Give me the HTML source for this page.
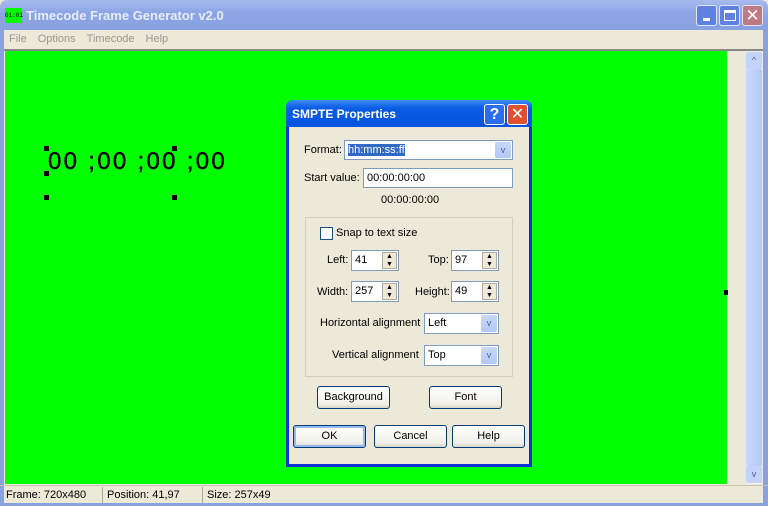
<!DOCTYPE html>
<html><head><style>
*{margin:0;padding:0;box-sizing:border-box}
body{width:768px;height:506px;overflow:hidden;background:#ece9d8;font-family:"Liberation Sans",sans-serif;font-size:11px;position:relative}
.abs{position:absolute}
.tb{left:0;top:0;width:768px;height:30px;background:linear-gradient(#a8bbef,#8ea6e6 40%,#8aa1e0);border-radius:7px 7px 0 0}
.title{left:26px;top:8px;color:#e6ecfa;font-weight:bold;font-size:13px}
.wb{top:5px;width:21px;height:21px;border:1px solid #dfe6fa;border-radius:3px}
.menu span{margin-right:11px;color:#9a988e}
.btn{position:absolute;background:linear-gradient(#fff,#f0efe9 80%,#d8d4c7);border:1px solid #003c74;border-radius:3px;text-align:center;font-size:11px;line-height:21px;color:#000}
.inp{position:absolute;background:#fff;border:1px solid #7f9db9;font-size:11px;padding-left:3px;line-height:18px}
.dd{position:absolute;right:1px;top:1px;width:16px;bottom:1px;background:linear-gradient(#c8d8fb,#b4c8f5);border-radius:2px;color:#4d6185;font-size:9px;text-align:center;line-height:17px}
.spin{position:absolute;right:1px;top:1px;width:15px;bottom:1px;background:#ece9d8;border:1px solid #b0aca0;font-size:7px;line-height:8px;text-align:center}
.lbl{position:absolute;font-size:11px;color:#000}
.h{position:absolute;width:5px;height:5px;background:#000}
</style></head><body>
<div class="abs tb"></div>
<div class="abs" style="left:5px;top:8px;width:17px;height:15px;background:#00ff00;font-size:6px;font-family:'Liberation Mono';line-height:15px;color:#000">01:01</div>
<div class="abs title">Timecode Frame Generator v2.0</div>
<div class="abs wb" style="left:696px;background:#5f82e0"><div class="abs" style="left:6px;top:12px;width:7px;height:3px;background:#fff"></div></div>
<div class="abs wb" style="left:719px;background:#5f82e0"><div class="abs" style="left:4px;top:4px;width:12px;height:11px;border:1px solid #fff;border-top-width:3px"></div></div>
<div class="abs wb" style="left:742px;background:#c07a85;color:#fff;font-size:17px;text-align:center;line-height:19px">✕</div>
<div class="abs" style="left:0;top:30px;width:4px;height:476px;background:#8aa1e0"></div>
<div class="abs" style="right:0;top:30px;width:5px;height:476px;background:#8aa1e0"></div>
<div class="abs" style="left:0;bottom:0;width:768px;height:3px;background:#8aa1e0"></div>
<div class="abs menu" style="left:9px;top:33px;font-size:11px"><span>File</span><span>Options</span><span>Timecode</span><span>Help</span></div>
<div class="abs" style="left:4px;top:49px;width:759px;height:2px;background:#888"></div>
<div class="abs" style="left:5px;top:51px;width:722px;height:433px;background:#00ff00"></div>
<div class="abs" style="left:746px;top:51px;width:16px;height:433px;background:#f3f1ea">
<div class="abs" style="left:0;top:1px;width:16px;height:17px;background:#c4d3fc;border-radius:2px;color:#4d6185;font-size:9px;text-align:center;line-height:17px">^</div>
<div class="abs" style="left:0;top:18px;width:16px;height:397px;background:linear-gradient(90deg,#c9d7fc,#b5c8f7);border-radius:2px"></div>
<div class="abs" style="left:0;top:415px;width:16px;height:17px;background:#c4d3fc;border-radius:2px;color:#4d6185;font-size:9px;text-align:center;line-height:17px">v</div>
</div>
<div class="abs" style="left:48px;top:148px;font-size:24px;letter-spacing:2.3px;white-space:nowrap;-webkit-text-stroke:0.4px #000">00 ;00 ;00 ;00</div>
<div class="h" style="left:44px;top:146px"></div><div class="h" style="left:172px;top:146px"></div>
<div class="h" style="left:44px;top:171px"></div>
<div class="h" style="left:44px;top:195px"></div><div class="h" style="left:172px;top:195px"></div>
<div class="h" style="left:724px;top:290px;width:4px"></div>
<div class="abs" style="left:0;top:485px;width:768px;height:1px;background:#c8c4b4"></div>
<div class="abs" style="left:6px;top:489px">Frame: 720x480</div>
<div class="abs" style="left:102px;top:487px;width:1px;height:16px;background:#aca899"></div>
<div class="abs" style="left:107px;top:489px">Position: 41,97</div>
<div class="abs" style="left:202px;top:487px;width:1px;height:16px;background:#aca899"></div>
<div class="abs" style="left:207px;top:489px">Size: 257x49</div>
<!-- dialog -->
<div class="abs" style="left:286px;top:100px;width:246px;height:367px;background:#0831d9;border-radius:7px 7px 0 0">
<div class="abs" style="left:0;top:0;width:246px;height:27px;background:linear-gradient(#3d8bf7,#0a5ce4 30%,#0553e0);border-radius:7px 7px 0 0"></div>
<div class="abs" style="left:6px;top:7px;color:#fff;font-weight:bold;font-size:12px">SMPTE Properties</div>
<div class="abs" style="left:198px;top:4px;width:21px;height:21px;background:#2a6df2;border:1px solid #fff;border-radius:3px;color:#fff;font-weight:bold;font-size:16px;text-align:center;line-height:19px">?</div>
<div class="abs" style="left:221px;top:4px;width:21px;height:21px;background:#e0522f;border:1px solid #fff;border-radius:3px;color:#fff;font-size:16px;text-align:center;line-height:19px">✕</div>
<div class="abs" style="left:3px;top:27px;width:240px;height:337px;background:#ece9d8"></div>
</div>
<div class="lbl" style="left:304px;top:144px">Format:</div>
<div class="inp" style="left:344px;top:140px;width:169px;height:20px"><span style="background:#316ac5;color:#fff">hh:mm:ss:ff</span><div class="dd">v</div></div>
<div class="lbl" style="left:304px;top:172px">Start value:</div>
<div class="inp" style="left:363px;top:168px;width:150px;height:20px">00:00:00:00</div>
<div class="lbl" style="left:381px;top:194px">00:00:00:00</div>
<div class="abs" style="left:305px;top:217px;width:208px;height:160px;border:1px solid #d0d0bf"></div>
<div class="abs" style="left:320px;top:227px;width:13px;height:13px;background:#fff;border:1px solid #1c5180"></div>
<div class="lbl" style="left:336px;top:227px">Snap to text size</div>
<div class="lbl" style="left:327px;top:254px">Left:</div>
<div class="inp" style="left:351px;top:250px;width:48px;height:21px">41<div class="spin">▲<br>▼</div></div>
<div class="lbl" style="left:428px;top:254px">Top:</div>
<div class="inp" style="left:451px;top:250px;width:48px;height:21px">97<div class="spin">▲<br>▼</div></div>
<div class="lbl" style="left:317px;top:286px">Width:</div>
<div class="inp" style="left:351px;top:281px;width:48px;height:21px">257<div class="spin">▲<br>▼</div></div>
<div class="lbl" style="left:415px;top:286px">Height:</div>
<div class="inp" style="left:451px;top:281px;width:48px;height:21px">49<div class="spin">▲<br>▼</div></div>
<div class="lbl" style="left:320px;top:317px">Horizontal alignment</div>
<div class="inp" style="left:424px;top:313px;width:75px;height:21px">Left<div class="dd">v</div></div>
<div class="lbl" style="left:332px;top:349px">Vertical alignment</div>
<div class="inp" style="left:424px;top:345px;width:75px;height:21px">Top<div class="dd">v</div></div>
<div class="btn" style="left:317px;top:386px;width:73px;height:23px">Background</div>
<div class="btn" style="left:429px;top:386px;width:73px;height:23px">Font</div>
<div class="btn" style="left:293px;top:425px;width:73px;height:23px;box-shadow:inset 0 0 0 2px #97b8f5">OK</div>
<div class="btn" style="left:374px;top:425px;width:73px;height:23px">Cancel</div>
<div class="btn" style="left:452px;top:425px;width:73px;height:23px">Help</div>
</body></html>
